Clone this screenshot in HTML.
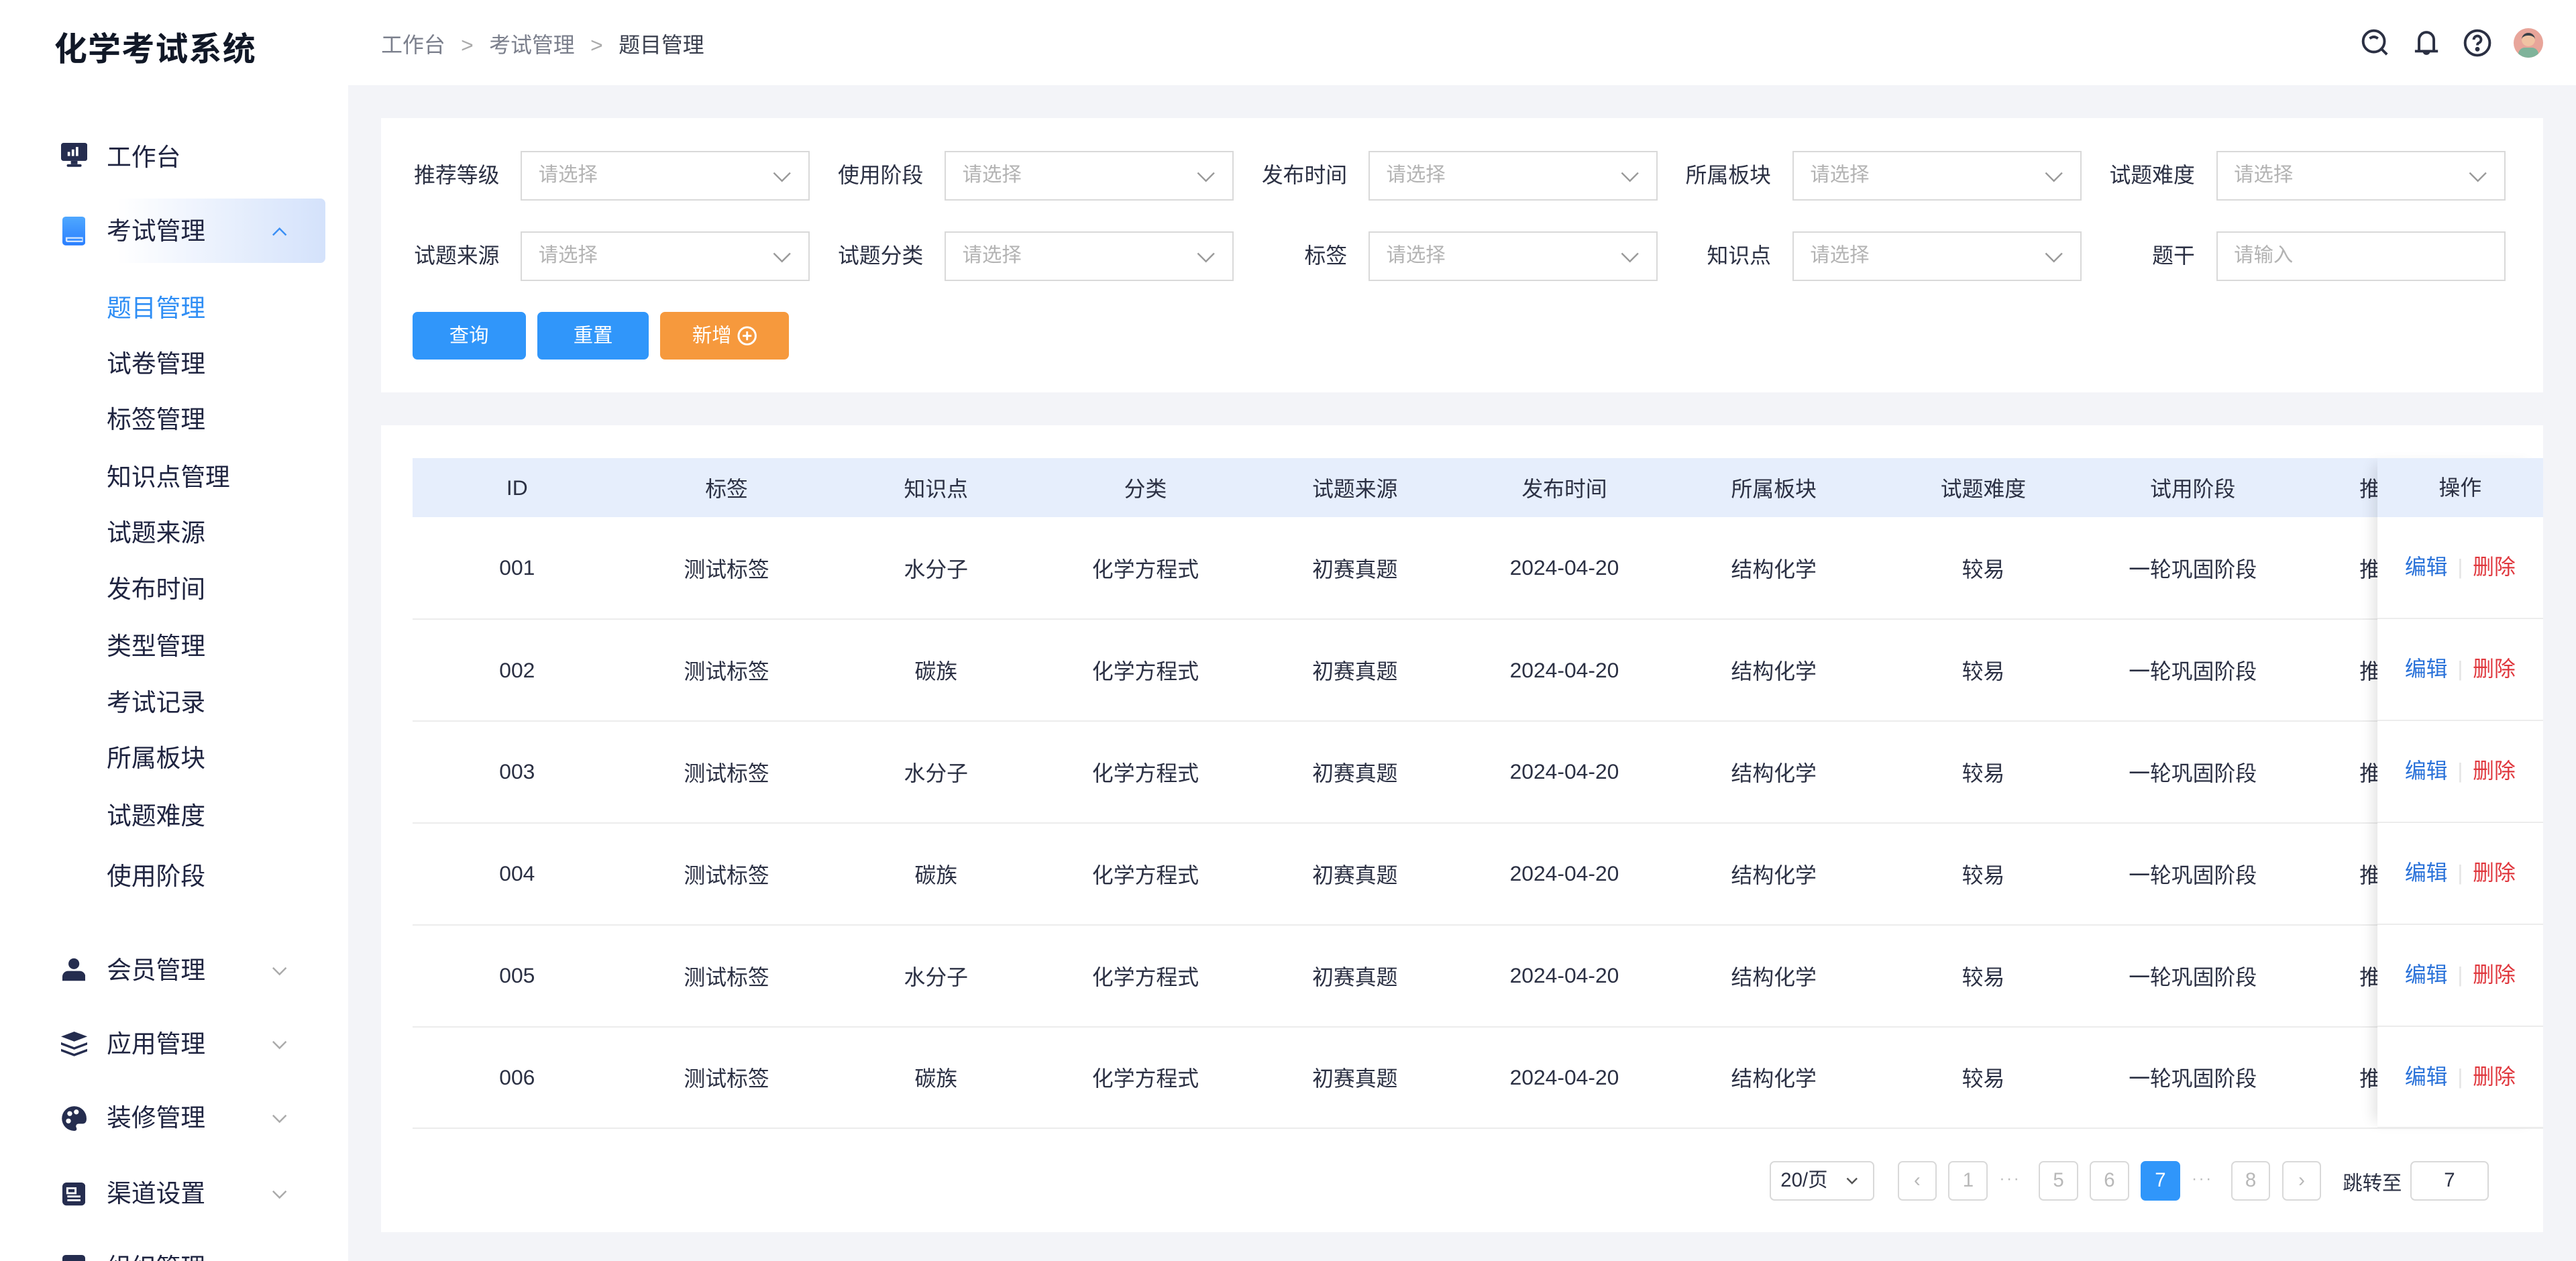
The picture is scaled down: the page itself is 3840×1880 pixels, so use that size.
<!DOCTYPE html>
<html><head><meta charset="utf-8">
<style>
*{margin:0;padding:0;box-sizing:border-box}
html,body{width:3840px;height:1880px;overflow:hidden;background:#f3f4f8}
#w{position:relative;width:1568px;height:768px;zoom:2.44898;background:#f3f4f8;font-family:"Liberation Sans","Noto Sans CJK SC",sans-serif;color:#2b3043;overflow:hidden}
.a{position:absolute}
.side{left:0;top:0;width:212px;height:768px;background:#fff}
.top{left:212px;top:0;width:1356px;height:52px;background:#fff}
.title{left:33px;top:14px;font-size:20px;font-weight:bold;color:#111827;letter-spacing:0.5px}
.bc{left:232px;top:17px;font-size:13px;color:#7b7f8c}
.bc b{font-weight:normal;color:#3a3f4e}
.mi{font-size:15px;color:#1f2440;left:65px;line-height:20px}
.sub{font-size:15px;color:#1f2440;left:65px;line-height:20px}
.chev{left:164px;width:12px;height:12px}
.card{background:#fff}
.lbl{font-size:13px;color:#2b3043;line-height:16px}
.sel{height:30px;border:1px solid #d9d9d9;background:#fff;font-size:12px;color:#b3b3b3;padding-left:10px;line-height:28px}
.sel svg{position:absolute;right:10px;top:9px}
.btn{height:29px;border-radius:3px;color:#fff;font-size:12px;text-align:center;line-height:29px;top:190px}
table{border-collapse:collapse;font-size:13px;color:#2b3043;table-layout:fixed}
td,th{font-weight:normal;text-align:center;white-space:nowrap;overflow:hidden}
th{height:36px;background:#e6eefc}
td{height:62px;border-bottom:1px solid #ececec}
.op{left:1447px;top:279px;width:101px;height:408px;background:#fff;box-shadow:-6px 0 8px -4px rgba(0,0,0,0.12)}
.pg{top:707px;height:24px;border:1px solid #d9d9d9;border-radius:3px;font-size:12px;color:#b8b8b8;text-align:center;line-height:22px;background:#fff}
</style></head><body>
<div id="w">
<div class="a side"></div>
<div class="a top"></div>
<div class="a title">化学考试系统</div>
<div class="a bc">工作台 <span style="margin:0 6px;color:#aaa">&gt;</span> 考试管理 <span style="margin:0 6px;color:#aaa">&gt;</span> <b>题目管理</b></div>
<!-- top icons -->
<svg class="a" style="left:1437px;top:17px" width="18" height="18" viewBox="0 0 18 18" fill="none" stroke="#2b3043" stroke-width="1.6"><circle cx="8" cy="8" r="6.5"/><path d="M12.7 12.7L16 16M5.5 6.3Q8 4.3 10.5 6.3"/></svg>
<svg class="a" style="left:1468px;top:17px" width="18" height="18" viewBox="0 0 18 18" fill="none" stroke="#2b3043" stroke-width="1.6"><path d="M4.5 14V7a4.5 4.5 0 0 1 9 0v7M2 14h14M7.5 14a1.5 1.5 0 0 0 3 0"/></svg>
<svg class="a" style="left:1499px;top:17px" width="18" height="18" viewBox="0 0 18 18" fill="none" stroke="#2b3043" stroke-width="1.6"><circle cx="9" cy="9" r="7.5"/><path d="M6.8 7a2.2 2.2 0 1 1 3 2c-.6.3-.8.7-.8 1.4"/><circle cx="9" cy="12.8" r=".6" fill="#2b3043"/></svg>
<div class="a" style="left:1530px;top:17px;width:18px;height:18px;border-radius:50%;background:#e8a59a;overflow:hidden"><div class="a" style="left:5px;top:3px;width:8px;height:8px;border-radius:50%;background:#f1c3a3;border-top:2px solid #394048"></div><div class="a" style="left:3px;top:12px;width:12px;height:8px;border-radius:4px;background:#7fb39a"></div></div>

<!-- sidebar -->
<svg class="a" style="left:37px;top:87px" width="16" height="15" viewBox="0 0 16 15"><rect x="0" y="0" width="16" height="11" rx="1.5" fill="#252d4f"/><rect x="6" y="11" width="4" height="2" fill="#252d4f"/><rect x="3.5" y="13" width="9" height="1.6" rx=".8" fill="#252d4f"/><rect x="4" y="5.5" width="1.5" height="2.5" fill="#fff"/><rect x="6.5" y="4" width="1.5" height="4" fill="#fff"/><rect x="9" y="2.5" width="1.5" height="5.5" fill="#fff"/></svg>
<div class="a mi" style="top:86px">工作台</div>
<div class="a" style="left:22px;top:121px;width:176px;height:39px;border-radius:3px;background:linear-gradient(90deg,#fff 0%,#fff 28%,#d4e2fb 100%)"></div>
<svg class="a" style="left:38px;top:132px" width="14" height="18" viewBox="0 0 14 18"><defs><linearGradient id="g" x1="0" y1="0" x2="0" y2="1"><stop offset="0" stop-color="#4fa8ff"/><stop offset="1" stop-color="#2a7fff"/></linearGradient></defs><rect x="0" y="0" width="14" height="17.5" rx="2" fill="url(#g)"/><path d="M2 12.5h10.5v3H3a1 1 0 0 1-1-1z" fill="#fff" opacity=".8"/><rect x="3" y="13.4" width="9" height="1.2" fill="#3a8fff"/></svg>
<div class="a mi" style="top:131px">考试管理</div>
<svg class="a chev" style="top:135px" viewBox="0 0 12 12" fill="none" stroke="#3a8ff5" stroke-width="1"><path d="M2 8L6 4L10 8"/></svg>
<div class="a sub" style="top:178px;color:#2f8ef5">题目管理</div>
<div class="a sub" style="top:212px">试卷管理</div>
<div class="a sub" style="top:246px">标签管理</div>
<div class="a sub" style="top:281px">知识点管理</div>
<div class="a sub" style="top:315px">试题来源</div>
<div class="a sub" style="top:349px">发布时间</div>
<div class="a sub" style="top:384px">类型管理</div>
<div class="a sub" style="top:418px">考试记录</div>
<div class="a sub" style="top:452px">所属板块</div>
<div class="a sub" style="top:487px">试题难度</div>
<div class="a sub" style="top:524px">使用阶段</div>

<svg class="a" style="left:38px;top:583px" width="14" height="15" viewBox="0 0 14 15"><circle cx="7" cy="3.6" r="3.3" fill="#252d4f"/><path d="M0 14v-2.5A3.5 3.5 0 0 1 3.5 8h7A3.5 3.5 0 0 1 14 11.5V14z" fill="#252d4f"/></svg>
<div class="a mi" style="top:581px">会员管理</div>
<svg class="a chev" style="top:585px" viewBox="0 0 12 12" fill="none" stroke="#aaa" stroke-width="1"><path d="M2 4L6 8L10 4"/></svg>
<svg class="a" style="left:37px;top:628px" width="16" height="15" viewBox="0 0 16 15" fill="#252d4f"><path d="M8 0L16 3L8 6L0 3z"/><path d="M0 6.5L8 9.5L16 6.5V8L8 11L0 8z"/><path d="M0 10.5L8 13.5L16 10.5V12L8 15L0 12z"/></svg>
<div class="a mi" style="top:626px">应用管理</div>
<svg class="a chev" style="top:630px" viewBox="0 0 12 12" fill="none" stroke="#aaa" stroke-width="1"><path d="M2 4L6 8L10 4"/></svg>
<svg class="a" style="left:37px;top:673px" width="16" height="16" viewBox="0 0 16 16"><path d="M8 0.5A7.5 7.5 0 0 0 8 15.5c1.5 0 1.8-1 1.3-2-.6-1.2.2-2.3 1.5-2.3h2.2c1.7 0 2.5-1.2 2.5-3A7.5 7.5 0 0 0 8 .5z" fill="#252d4f"/><circle cx="5.3" cy="5" r="1.5" fill="#fff"/><circle cx="9.3" cy="4" r="1.5" fill="#fff"/><circle cx="4.5" cy="9.5" r="1.5" fill="#fff"/></svg>
<div class="a mi" style="top:671px">装修管理</div>
<svg class="a chev" style="top:675px" viewBox="0 0 12 12" fill="none" stroke="#aaa" stroke-width="1"><path d="M2 4L6 8L10 4"/></svg>
<svg class="a" style="left:38px;top:720px" width="14" height="14" viewBox="0 0 14 14"><rect width="14" height="14" rx="2.5" fill="#252d4f"/><path d="M3 3.5h5v3H3zM3 8.5h8M3 10.8h8" stroke="#fff" stroke-width="1.2" fill="none"/></svg>
<div class="a mi" style="top:717px">渠道设置</div>
<svg class="a chev" style="top:721px" viewBox="0 0 12 12" fill="none" stroke="#aaa" stroke-width="1"><path d="M2 4L6 8L10 4"/></svg>
<div class="a" style="left:38px;top:764px;width:14px;height:8px;border-radius:2px;background:#252d4f"></div>
<div class="a mi" style="top:762px">组织管理</div>

<!-- filter card -->
<div class="a card" style="left:232px;top:72px;width:1316px;height:167px"></div>
<div class="a lbl" style="left:252px;top:99px">推荐等级</div>
<div class="a sel" style="left:317px;top:92px;width:176px">请选择<svg width="12" height="12" viewBox="0 0 12 12" fill="none" stroke="#999"><path d="M1 3.5L6 8.5L11 3.5"/></svg></div>
<div class="a lbl" style="left:510px;top:99px">使用阶段</div>
<div class="a sel" style="left:575px;top:92px;width:176px">请选择<svg width="12" height="12" viewBox="0 0 12 12" fill="none" stroke="#999"><path d="M1 3.5L6 8.5L11 3.5"/></svg></div>
<div class="a lbl" style="left:768px;top:99px">发布时间</div>
<div class="a sel" style="left:833px;top:92px;width:176px">请选择<svg width="12" height="12" viewBox="0 0 12 12" fill="none" stroke="#999"><path d="M1 3.5L6 8.5L11 3.5"/></svg></div>
<div class="a lbl" style="left:1026px;top:99px">所属板块</div>
<div class="a sel" style="left:1091px;top:92px;width:176px">请选择<svg width="12" height="12" viewBox="0 0 12 12" fill="none" stroke="#999"><path d="M1 3.5L6 8.5L11 3.5"/></svg></div>
<div class="a lbl" style="left:1284px;top:99px">试题难度</div>
<div class="a sel" style="left:1349px;top:92px;width:176px">请选择<svg width="12" height="12" viewBox="0 0 12 12" fill="none" stroke="#999"><path d="M1 3.5L6 8.5L11 3.5"/></svg></div>

<div class="a lbl" style="left:252px;top:148px">试题来源</div>
<div class="a sel" style="left:317px;top:141px;width:176px">请选择<svg width="12" height="12" viewBox="0 0 12 12" fill="none" stroke="#999"><path d="M1 3.5L6 8.5L11 3.5"/></svg></div>
<div class="a lbl" style="left:510px;top:148px">试题分类</div>
<div class="a sel" style="left:575px;top:141px;width:176px">请选择<svg width="12" height="12" viewBox="0 0 12 12" fill="none" stroke="#999"><path d="M1 3.5L6 8.5L11 3.5"/></svg></div>
<div class="a lbl" style="left:794px;top:148px">标签</div>
<div class="a sel" style="left:833px;top:141px;width:176px">请选择<svg width="12" height="12" viewBox="0 0 12 12" fill="none" stroke="#999"><path d="M1 3.5L6 8.5L11 3.5"/></svg></div>
<div class="a lbl" style="left:1039px;top:148px">知识点</div>
<div class="a sel" style="left:1091px;top:141px;width:176px">请选择<svg width="12" height="12" viewBox="0 0 12 12" fill="none" stroke="#999"><path d="M1 3.5L6 8.5L11 3.5"/></svg></div>
<div class="a lbl" style="left:1310px;top:148px">题干</div>
<div class="a sel" style="left:1349px;top:141px;width:176px">请输入</div>

<div class="a btn" style="left:251px;width:69px;background:#3096fa">查询</div>
<div class="a btn" style="left:327px;width:68px;background:#3096fa">重置</div>
<div class="a btn" style="left:402px;width:78px;background:#f6993d">新增 <svg style="vertical-align:-2px" width="12" height="12" viewBox="0 0 12 12" fill="none" stroke="#fff" stroke-width="1.2"><circle cx="6" cy="6" r="5.2"/><path d="M6 3.3v5.4M3.3 6h5.4"/></svg></div>

<!-- table card -->
<div class="a card" style="left:232px;top:259px;width:1316px;height:491px"></div>
<div class="a" style="left:251px;top:279px;width:1297px;height:410px;overflow:hidden">
<table style="width:1402px">
<colgroup><col style="width:127.5px"><col style="width:127.5px"><col style="width:127.5px"><col style="width:127.5px"><col style="width:127.5px"><col style="width:127.5px"><col style="width:127.5px"><col style="width:127.5px"><col style="width:127.5px"><col style="width:127.5px"><col style="width:127px"></colgroup>
<tr><th>ID</th><th>标签</th><th>知识点</th><th>分类</th><th>试题来源</th><th>发布时间</th><th>所属板块</th><th>试题难度</th><th>试用阶段</th><th>推荐等级</th><th></th></tr>
<tr><td>001</td><td>测试标签</td><td>水分子</td><td>化学方程式</td><td>初赛真题</td><td>2024-04-20</td><td>结构化学</td><td>较易</td><td>一轮巩固阶段</td><td>推荐等级</td><td></td></tr>
<tr><td>002</td><td>测试标签</td><td>碳族</td><td>化学方程式</td><td>初赛真题</td><td>2024-04-20</td><td>结构化学</td><td>较易</td><td>一轮巩固阶段</td><td>推荐等级</td><td></td></tr>
<tr><td>003</td><td>测试标签</td><td>水分子</td><td>化学方程式</td><td>初赛真题</td><td>2024-04-20</td><td>结构化学</td><td>较易</td><td>一轮巩固阶段</td><td>推荐等级</td><td></td></tr>
<tr><td>004</td><td>测试标签</td><td>碳族</td><td>化学方程式</td><td>初赛真题</td><td>2024-04-20</td><td>结构化学</td><td>较易</td><td>一轮巩固阶段</td><td>推荐等级</td><td></td></tr>
<tr><td>005</td><td>测试标签</td><td>水分子</td><td>化学方程式</td><td>初赛真题</td><td>2024-04-20</td><td>结构化学</td><td>较易</td><td>一轮巩固阶段</td><td>推荐等级</td><td></td></tr>
<tr><td>006</td><td>测试标签</td><td>碳族</td><td>化学方程式</td><td>初赛真题</td><td>2024-04-20</td><td>结构化学</td><td>较易</td><td>一轮巩固阶段</td><td>推荐等级</td><td></td></tr>
</table>
</div>
<div class="a op">
<div style="height:36px;background:#e6eefc;text-align:center;line-height:36px;font-size:13px">操作</div>
<div style="font-size:13px">
<div style="height:62px;border-bottom:1px solid #ececec;text-align:center;line-height:61px"><span style="color:#2a72d9">编辑</span><span style="color:#e5e5e5;margin:0 6px">|</span><span style="color:#e0383e">删除</span></div>
<div style="height:62px;border-bottom:1px solid #ececec;text-align:center;line-height:61px"><span style="color:#2a72d9">编辑</span><span style="color:#e5e5e5;margin:0 6px">|</span><span style="color:#e0383e">删除</span></div>
<div style="height:62px;border-bottom:1px solid #ececec;text-align:center;line-height:61px"><span style="color:#2a72d9">编辑</span><span style="color:#e5e5e5;margin:0 6px">|</span><span style="color:#e0383e">删除</span></div>
<div style="height:62px;border-bottom:1px solid #ececec;text-align:center;line-height:61px"><span style="color:#2a72d9">编辑</span><span style="color:#e5e5e5;margin:0 6px">|</span><span style="color:#e0383e">删除</span></div>
<div style="height:62px;border-bottom:1px solid #ececec;text-align:center;line-height:61px"><span style="color:#2a72d9">编辑</span><span style="color:#e5e5e5;margin:0 6px">|</span><span style="color:#e0383e">删除</span></div>
<div style="height:62px;border-bottom:1px solid #ececec;text-align:center;line-height:61px"><span style="color:#2a72d9">编辑</span><span style="color:#e5e5e5;margin:0 6px">|</span><span style="color:#e0383e">删除</span></div>
</div></div>

<!-- pagination -->
<div class="a pg" style="left:1077px;width:64px;color:#2b3043;text-align:left;padding-left:6px">20/页<svg style="position:absolute;right:9px;top:8px" width="8" height="6" viewBox="0 0 8 6" fill="none" stroke="#555"><path d="M1 1.5L4 4.5L7 1.5"/></svg></div>
<div class="a pg" style="left:1155px;width:24px">&lsaquo;</div>
<div class="a pg" style="left:1186px;width:24px">1</div>
<div class="a" style="left:1217px;top:712px;font-size:10px;color:#bbb;letter-spacing:1px">···</div>
<div class="a pg" style="left:1241px;width:24px">5</div>
<div class="a pg" style="left:1272px;width:24px">6</div>
<div class="a pg" style="left:1303px;width:24px;background:#3096fa;border-color:#3096fa;color:#fff">7</div>
<div class="a" style="left:1334px;top:712px;font-size:10px;color:#bbb;letter-spacing:1px">···</div>
<div class="a pg" style="left:1358px;width:24px">8</div>
<div class="a pg" style="left:1389px;width:24px">&rsaquo;</div>
<div class="a" style="left:1426px;top:711px;font-size:12px;color:#2b3043">跳转至</div>
<div class="a pg" style="left:1467px;width:48px;color:#2b3043">7</div>
</div>
</body></html>
